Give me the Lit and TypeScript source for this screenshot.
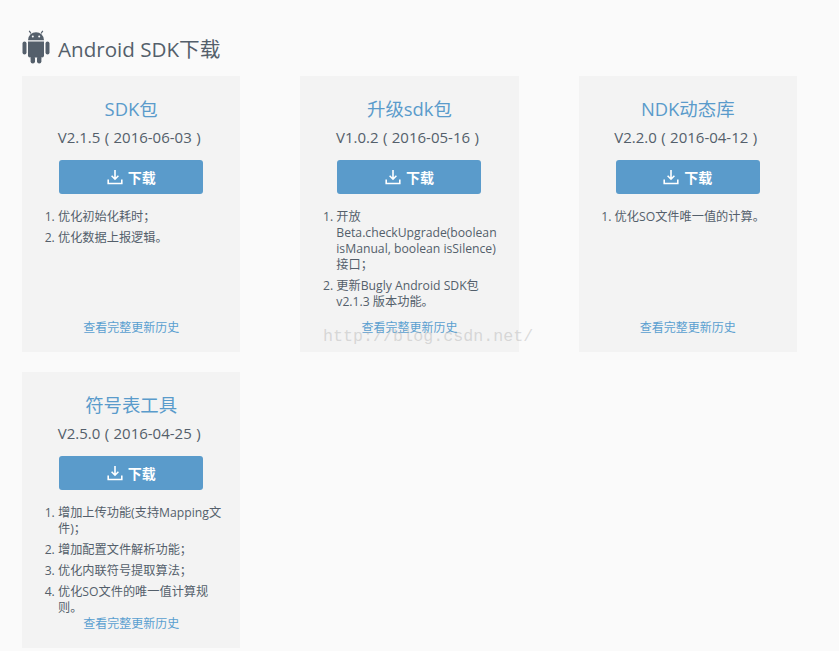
import { LitElement, html, css, svg } from "lit";
import { customElement } from "lit/decorators.js";

const cards = [
  { title: "SDK包", ver: "V2.1.5 ( 2016-06-03 )", items: ["优化初始化耗时；", "优化数据上报逻辑。"] },
  { title: "升级sdk包", ver: "V1.0.2 ( 2016-05-16 )", items: ["开放Beta.checkUpgrade(boolean isManual, boolean isSilence)接口；", "更新Bugly Android SDK包v2.1.3 版本功能。"] },
  { title: "NDK动态库", ver: "V2.2.0 ( 2016-04-12 )", items: ["优化SO文件唯一值的计算。"] },
  { title: "符号表工具", ver: "V2.5.0 ( 2016-04-25 )", items: ["增加上传功能(支持Mapping文件)；", "增加配置文件解析功能；", "优化内联符号提取算法；", "优化SO文件的唯一值计算规则。"] },
];

const android = svg`<svg class="android" viewBox="0 0 28 34" width="28" height="34" fill="#545f6b">
  <path d="M6 10.2a8 8 0 0 1 16 0z"/>
  <path d="M9 3.5L7.2 .8M19 3.5L20.8 .8" stroke="#545f6b" stroke-width="1.2" fill="none"/>
  <path d="M6 11.6h16v14a2 2 0 0 1-2 2H8a2 2 0 0 1-2-2z"/>
  <rect x="0.5" y="11.6" width="4" height="13" rx="2"/>
  <rect x="23.5" y="11.6" width="4" height="13" rx="2"/>
  <rect x="8.6" y="26" width="4.4" height="7.5" rx="2.2"/>
  <rect x="15" y="26" width="4.4" height="7.5" rx="2.2"/>
  <circle cx="10.8" cy="6.6" r="1" fill="#fafafa"/><circle cx="17.2" cy="6.6" r="1" fill="#fafafa"/>
</svg>`;

const dl = svg`<svg class="dl" viewBox="0 0 16 16" width="16" height="16" fill="none" stroke="#fff" stroke-width="1.6">
  <path d="M8 1v9M4.6 6.8L8 10.2l3.4-3.4"/>
  <path d="M1.2 10.5v4h13.6v-4"/>
</svg>`;

@customElement("app-root")
export class AppRoot extends LitElement {
  static styles = css`
    :host { display: block; position: relative; width: 839px; height: 651px; overflow: hidden; background: #fafafa; font-family: "Open Sans", "Noto Sans CJK SC", sans-serif; color: #545f6b; }
    .page { padding: 29px 22px 0 22px; }
    h1 { display: flex; align-items: center; gap: 8px; margin: 0 0 9px; height: 38px; font-size: 20.6px; font-weight: 400; color: #545f6b; }
    .android { flex: none; margin-top: -2px; }
    .grid { display: grid; grid-template-columns: repeat(3, 218.3px); column-gap: 60px; row-gap: 20px; }
    .card { position: relative; height: 276px; box-sizing: border-box; background: #f3f3f3; padding-top: 20px; display: flex; flex-direction: column; text-align: center; }
    .title { font-size: 18.4px; line-height: 26px; color: #5a9bcb; }
    .ver { font-size: 15px; line-height: 20px; margin-top: 5px; padding-right: 4px; word-spacing: 0.5px; color: #545f6b; }
    .btn { display: flex; align-items: center; justify-content: center; gap: 5px; width: 144px; height: 34px; align-self: center; margin-top: 13px; background: #5a9bcb; border-radius: 3px; color: #fff; font-size: 14px; font-weight: 600; }
    ol { flex: 1; margin: 15px 18px 0 20px; padding: 0 0 0 16px; text-align: left; font-size: 12.2px; line-height: 16px; }
    li { margin-bottom: 5px; }
    .more { font-size: 12px; line-height: 16px; color: #5a9fd0; position: absolute; left: 0; right: 0; bottom: 16px; }
    .mark { position: absolute; left: 323px; top: 325px; font: 16.7px/24px "Liberation Mono", "DejaVu Sans Mono", monospace; color: rgba(170,170,170,0.4); pointer-events: none; white-space: nowrap; }
  `;

  render() {
    return html`<div class="page">
        <h1>${android}<span>Android SDK下载</span></h1>
        <div class="grid">
          ${cards.map(
            (c) => html`<section class="card">
              <div class="title">${c.title}</div>
              <div class="ver">${c.ver}</div>
              <div class="btn">${dl}<span>下载</span></div>
              <ol>${c.items.map((i) => html`<li>${i}</li>`)}</ol>
              <div class="more">查看完整更新历史</div>
            </section>`
          )}
        </div>
      </div>
      <div class="mark">http://blog.csdn.net/</div>`;
  }
}
